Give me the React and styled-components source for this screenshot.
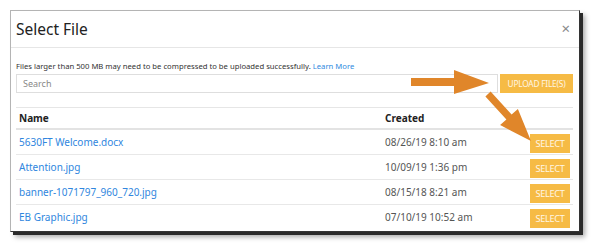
import React from "react";
import styled, { createGlobalStyle } from "styled-components";

const files = [
  { name: "5630FT Welcome.docx", created: "08/26/19 8:10 am" },
  { name: "Attention.jpg", created: "10/09/19 1:36 pm" },
  { name: "banner-1071797_960_720.jpg", created: "08/15/18 8:21 am" },
  { name: "EB Graphic.jpg", created: "07/10/19 10:52 am" },
];

const App = () => (
  <Stage>
    <GlobalStyle />
    <Modal>
      <Header>
        <Title>Select File</Title>
        <Close>×</Close>
      </Header>
      <Body>
        <Notice>
          Files larger than 500 MB may need to be compressed to be uploaded
          successfully. <Link>Learn More</Link>
        </Notice>
        <SearchRow>
          <SearchInput placeholder="Search" />
          <OrangeButton $wide>UPLOAD FILE(S)</OrangeButton>
        </SearchRow>
        <Table>
          <HeadRow>
            <HeadCell>Name</HeadCell>
            <HeadCell>Created</HeadCell>
            <HeadCell />
          </HeadRow>
          {files.map((f, i) => (
            <Row key={f.name} $last={i === files.length - 1}>
              <NameCell>{f.name}</NameCell>
              <DateCell>{f.created}</DateCell>
              <ActionCell>
                <OrangeButton>SELECT</OrangeButton>
              </ActionCell>
            </Row>
          ))}
        </Table>
      </Body>
    </Modal>
    <Arrows viewBox="0 0 600 252">
      <polygon
        fill="#e0862a"
        points="411,78 454,78 454,70 489,83 454,94 454,86 411,86"
      />
      <polygon
        fill="#e0862a"
        points="485.4,96.4 490.6,91.6 511.6,114.6 517.9,108.9 531,141 500.1,125.1 506.4,119.4"
      />
    </Arrows>
  </Stage>
);

export default App;

const GlobalStyle = createGlobalStyle`
  body {
    margin: 0;
    background: #fff;
    font-family: "Noto Sans", "Open Sans", sans-serif;
  }
`;

const Stage = styled.div`
  position: relative;
  width: 600px;
  height: 252px;
  padding: 10px;
  box-sizing: border-box;
  overflow: hidden;
`;

const Modal = styled.div`
  width: 570px;
  height: 222px;
  box-sizing: border-box;
  background: #fff;
  border: 1px solid #b4b4b4;
  border-right-color: #333;
  border-bottom-color: #333;
  box-shadow: 3px 3px 0 #2a2a2a, 5px 5px 5px rgba(0, 0, 0, 0.35);
  display: flex;
  flex-direction: column;
`;

const Header = styled.div`
  height: 36px;
  flex: none;
  display: flex;
  align-items: center;
  justify-content: space-between;
  padding: 0 9px 0 5px;
  border-bottom: 1px solid #e6e6e6;
`;

const Title = styled.h1`
  margin: 0;
  font-size: 15.5px;
  font-weight: 400;
  color: #222;
`;

const Close = styled.span`
  font-size: 15px;
  color: #888;
  line-height: 1;
  margin-top: -2px;
`;

const Body = styled.div`
  padding: 0 6px 0 5px;
  flex: 1;
  display: flex;
  flex-direction: column;
`;

const Notice = styled.p`
  margin: 13px 0 0;
  font-size: 7.7px;
  color: #333;
  line-height: 11px;
`;

const Link = styled.a`
  color: #2f8ae0;
`;

const SearchRow = styled.div`
  display: flex;
  gap: 2px;
  margin-top: 2px;
`;

const SearchInput = styled.input`
  flex: 1;
  height: 19px;
  box-sizing: border-box;
  border: 1px solid #dedede;
  padding: 0 6px;
  font-family: inherit;
  font-size: 9px;
  outline: none;
  &::placeholder {
    color: #888;
  }
`;

const OrangeButton = styled.button`
  height: 19px;
  width: ${(p) => (p.$wide ? "73px" : "40px")};
  padding: 0;
  border: none;
  background: #f6bb45;
  color: #fff6e4;
  font-family: inherit;
  font-size: ${(p) => (p.$wide ? "8.3px" : "9.2px")};
  letter-spacing: ${(p) => (p.$wide ? "-0.2px" : "-0.3px")};
  white-space: nowrap;
  margin-top: ${(p) => (p.$wide ? "0" : "2px")};
`;

const Table = styled.div`
  margin-top: 14px;
  border-top: 1px solid #e6e6e6;
`;

const grid = `
  display: grid;
  grid-template-columns: 366px 1fr 46px;
  align-items: center;
`;

const HeadRow = styled.div`
  ${grid}
  height: 20px;
  border-bottom: 2px solid #e3e3e3;
`;

const HeadCell = styled.div`
  padding: 0 3px;
  font-size: 10px;
  font-weight: 700;
  color: #222;
`;

const Row = styled.div`
  ${grid}
  height: 24px;
  border-bottom: ${(p) => (p.$last ? "none" : "1px solid #e8e8e8")};
`;

const NameCell = styled.div`
  padding: 0 3px;
  font-size: 10px;
  color: #2f86de;
`;

const DateCell = styled.div`
  padding: 0 3px;
  font-size: 10px;
  color: #555;
`;

const ActionCell = styled.div`
  display: flex;
  justify-content: flex-end;
  padding-right: 3px;
`;

const Arrows = styled.svg`
  position: absolute;
  inset: 0;
  width: 600px;
  height: 252px;
  pointer-events: none;
`;
